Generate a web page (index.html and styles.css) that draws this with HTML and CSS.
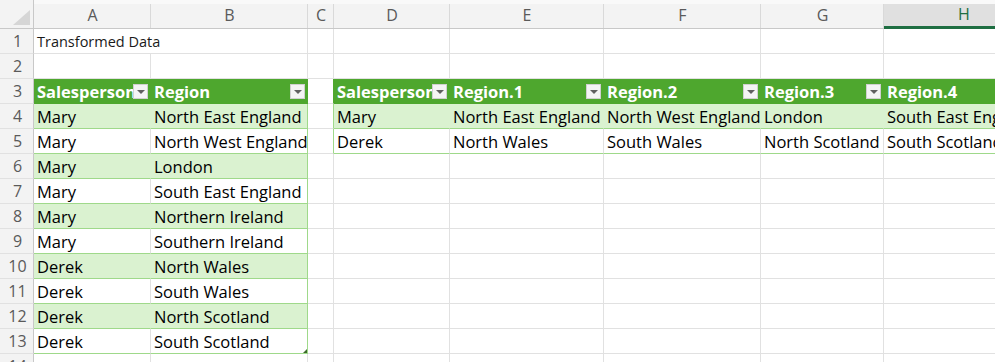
FILE: index.html
```html
<!DOCTYPE html>
<html>
<head>
<meta charset="utf-8">
<link rel="stylesheet" href="styles.css">
</head>
<body>
<div class="sheet">
  <div class="corner"><svg width="33" height="28" viewBox="0 0 33 28"><polygon points="30,10 30,25 13,25" fill="#d6d6d6"/></svg></div>
  <div class="colh">A</div><div class="colh">B</div><div class="colh">C</div><div class="colh">D</div><div class="colh">E</div><div class="colh">F</div><div class="colh">G</div><div class="colh sel">H</div>

  <div class="rowh">1</div><div class="c span2 title">Transformed Data</div><div class="c"></div><div class="c"></div><div class="c"></div><div class="c"></div><div class="c"></div><div class="c"></div>

  <div class="rowh">2</div><div class="c"></div><div class="c"></div><div class="c"></div><div class="c"></div><div class="c"></div><div class="c"></div><div class="c"></div><div class="c"></div>

  <div class="rowh">3</div>
  <div class="c th"><span class="tx">Salesperson</span><span class="flt"></span></div>
  <div class="c th"><span class="tx">Region</span><span class="flt"></span></div>
  <div class="c edge-h"></div>
  <div class="c th"><span class="tx">Salesperson</span><span class="flt"></span></div>
  <div class="c th"><span class="tx">Region.1</span><span class="flt"></span></div>
  <div class="c th"><span class="tx">Region.2</span><span class="flt"></span></div>
  <div class="c th"><span class="tx">Region.3</span><span class="flt"></span></div>
  <div class="c th"><span class="tx">Region.4</span></div>

  <div class="rowh">4</div>
  <div class="c band">Mary</div><div class="c band last">North East England</div><div class="c edge"></div>
  <div class="c band">Mary</div><div class="c band">North East England</div><div class="c band">North West England</div><div class="c band">London</div><div class="c band">South East England</div>

  <div class="rowh">5</div>
  <div class="c tb">Mary</div><div class="c tb last">North West England</div><div class="c edge"></div>
  <div class="c tb">Derek</div><div class="c tb">North Wales</div><div class="c tb">South Wales</div><div class="c tb">North Scotland</div><div class="c tb">South Scotland</div>

  <div class="rowh">6</div>
  <div class="c band">Mary</div><div class="c band last">London</div><div class="c"></div><div class="c"></div><div class="c"></div><div class="c"></div><div class="c"></div><div class="c"></div>

  <div class="rowh">7</div>
  <div class="c tb">Mary</div><div class="c tb last">South East England</div><div class="c"></div><div class="c"></div><div class="c"></div><div class="c"></div><div class="c"></div><div class="c"></div>

  <div class="rowh">8</div>
  <div class="c band">Mary</div><div class="c band last">Northern Ireland</div><div class="c"></div><div class="c"></div><div class="c"></div><div class="c"></div><div class="c"></div><div class="c"></div>

  <div class="rowh">9</div>
  <div class="c tb">Mary</div><div class="c tb last">Southern Ireland</div><div class="c"></div><div class="c"></div><div class="c"></div><div class="c"></div><div class="c"></div><div class="c"></div>

  <div class="rowh">10</div>
  <div class="c band">Derek</div><div class="c band last">North Wales</div><div class="c"></div><div class="c"></div><div class="c"></div><div class="c"></div><div class="c"></div><div class="c"></div>

  <div class="rowh">11</div>
  <div class="c tb">Derek</div><div class="c tb last">South Wales</div><div class="c"></div><div class="c"></div><div class="c"></div><div class="c"></div><div class="c"></div><div class="c"></div>

  <div class="rowh">12</div>
  <div class="c band">Derek</div><div class="c band last">North Scotland</div><div class="c"></div><div class="c"></div><div class="c"></div><div class="c"></div><div class="c"></div><div class="c"></div>

  <div class="rowh">13</div>
  <div class="c tb">Derek</div><div class="c tb last end">South Scotland<span class="grip"></span></div><div class="c"></div><div class="c"></div><div class="c"></div><div class="c"></div><div class="c"></div><div class="c"></div>

  <div class="rowh">14</div><div class="c"></div><div class="c"></div><div class="c"></div><div class="c"></div><div class="c"></div><div class="c"></div><div class="c"></div><div class="c"></div>
</div>
</body>
</html>
```
FILE: styles.css
```css
html, body {
  margin: 0;
  padding: 0;
  background: #ffffff;
}

.sheet {
  width: 995px;
  height: 362px;
  overflow: hidden;
  display: grid;
  grid-template-columns: 34px 117px 157px 26px 116px 154px 157px 123px 160px;
  grid-template-rows: 29px;
  grid-auto-rows: 25px;
  font-family: "Open Sans", "Noto Sans", sans-serif;
}

.corner {
  background: #f3f3f3;
  border-right: 1px solid #c8c8c8;
  border-bottom: 1px solid #c8c8c8;
  box-sizing: border-box;
  display: block;
}

.corner svg {
  display: block;
}

.colh {
  box-sizing: border-box;
  background: #f3f3f3;
  border-top: 4px solid #f9f9f9;
  border-bottom: 1px solid #c8c8c8;
  box-shadow: inset -1px 0 0 #d9d9d9;
  color: #5a5a5a;
  font-size: 16px;
  line-height: 23px;
  text-align: center;
}

.colh.sel {
  background: #e0e0e0;
  border-bottom: 3px solid #1e6e42;
  color: #1e6e42;
  line-height: 21px;
  box-shadow: inset -1px 0 0 #c8c8c8;
}

.rowh {
  box-sizing: border-box;
  background: #f3f3f3;
  border-right: 1px solid #c8c8c8;
  border-bottom: 1px solid #e1e1e1;
  color: #5a5a5a;
  font-size: 16px;
  line-height: 24px;
  text-align: center;
  padding-left: 2px;
}

.c {
  box-sizing: border-box;
  border-right: 1px solid #e1e1e1;
  border-bottom: 1px solid #e1e1e1;
  padding: 0 0 0 3px;
  font-size: 16.5px;
  line-height: 25px;
  color: #000;
  white-space: nowrap;
  overflow: hidden;
  min-width: 0;
}

.span2 {
  grid-column: span 2;
}

.title {
  font-size: 14.5px;
  line-height: 26px;
  color: #1a1a1a;
}

.th {
  background: #4ea72e;
  border-right-color: #4ea72e;
  border-bottom-color: #4ea72e;
  color: #ffffff;
  font-weight: 700;
  display: flex;
  align-items: center;
  padding-right: 2px;
}

.th .tx {
  flex: 1 1 auto;
  min-width: 0;
  overflow: hidden;
  white-space: nowrap;
}

.flt {
  flex: 0 0 auto;
  width: 15px;
  height: 15px;
  box-sizing: border-box;
  background: #f4f4f4;
  border: 1px solid #d0d0d0;
  position: relative;
  margin-top: 1px;
}

.flt::after {
  content: "";
  position: absolute;
  left: 3px;
  top: 5px;
  border-left: 4px solid transparent;
  border-right: 4px solid transparent;
  border-top: 4px solid #606060;
}

.band {
  background: #daf2d0;
  border-right-color: #daf2d0;
  border-bottom-color: #9fd98a;
}

.tb {
  border-bottom-color: #9fd98a;
}

.last {
  border-right-color: #9fd98a;
}

.th.last {
  border-right-color: #4ea72e;
}

.edge-h {
  border-right-color: #4ea72e;
}

.edge {
  border-right-color: #9fd98a;
}

.end {
  position: relative;
}

.grip {
  position: absolute;
  right: 0;
  bottom: 0;
  width: 0;
  height: 0;
  border-left: 4px solid transparent;
  border-bottom: 4px solid #3d6b2c;
}
```
